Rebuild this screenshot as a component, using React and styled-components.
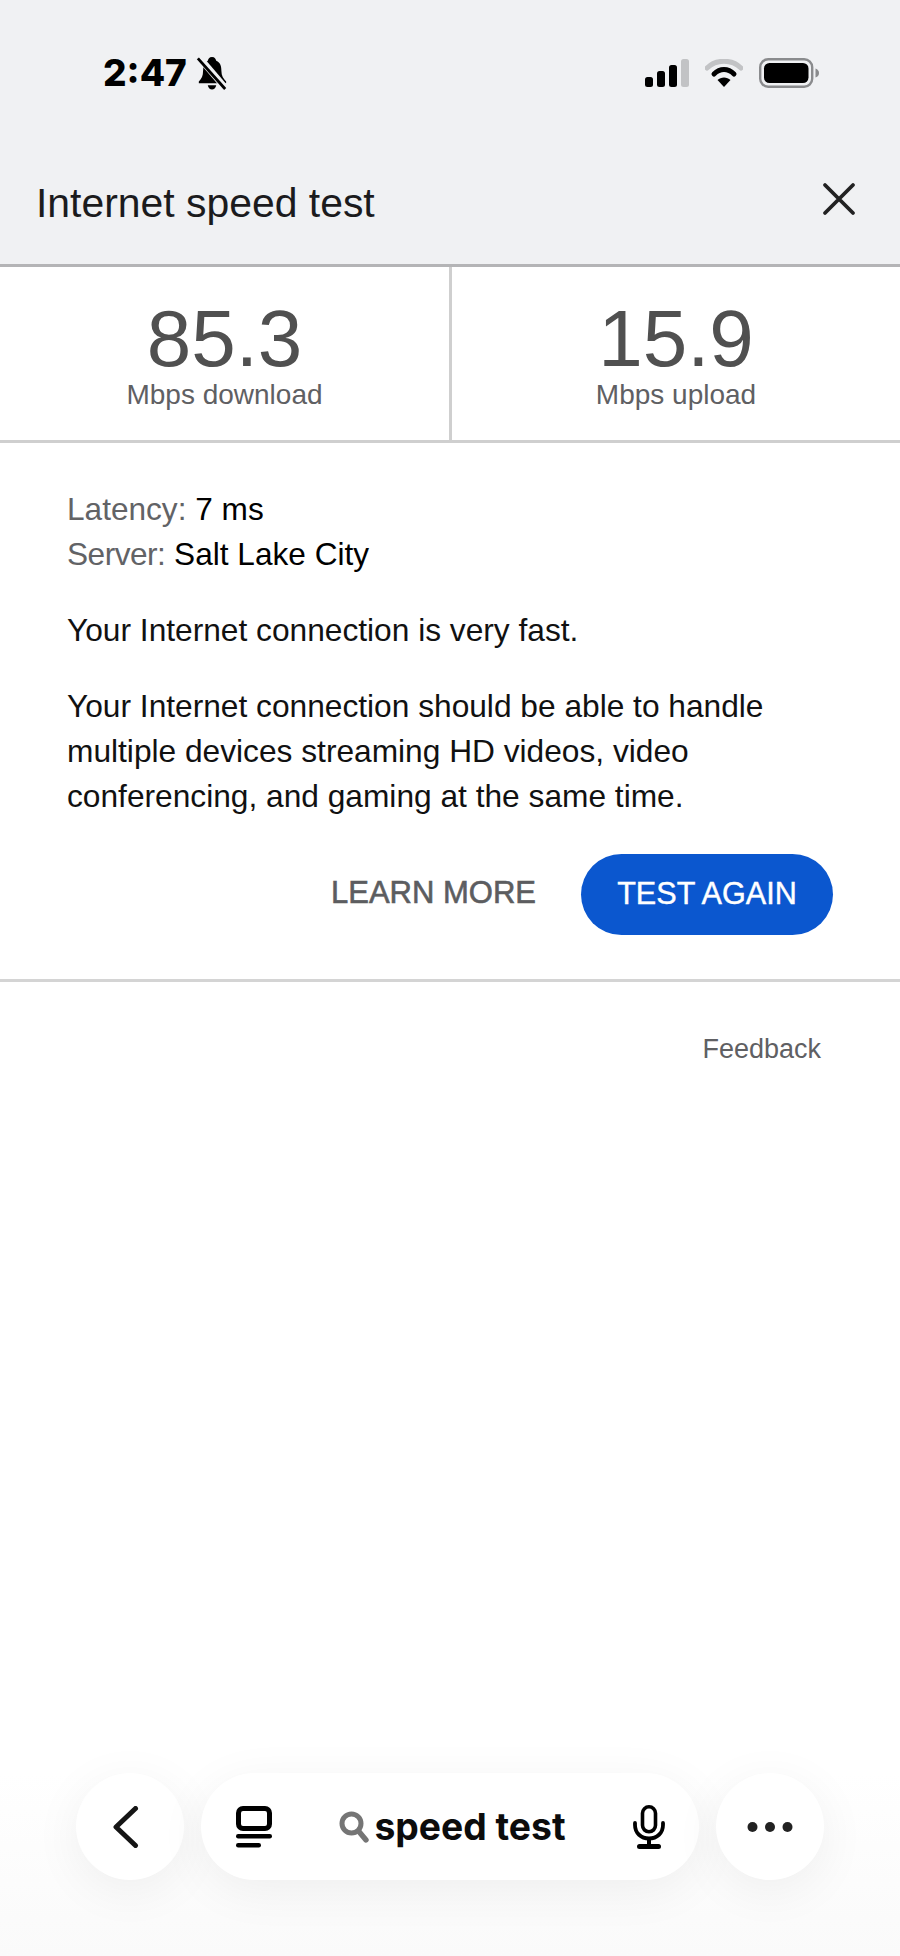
import React from "react";
import styled, { createGlobalStyle } from "styled-components";

const GlobalStyle = createGlobalStyle`
  html, body {
    margin: 0;
    padding: 0;
    background: #fff;
  }
  * {
    box-sizing: border-box;
  }
`;

const Page = styled.div`
  width: 900px;
  height: 1956px;
  background: #fff;
  font-family: "Liberation Sans", Arial, sans-serif;
  display: flex;
  flex-direction: column;
  overflow: hidden;
`;

const TopArea = styled.div`
  height: 267px;
  background: #f0f1f3;
  border-bottom: 3px solid #b4b4b6;
  display: flex;
  flex-direction: column;
`;

const StatusBar = styled.div`
  height: 148px;
  padding: 50px 81px 0 103px;
  display: flex;
  justify-content: space-between;
  align-items: flex-start;
`;

const TimeGroup = styled.div`
  display: flex;
  align-items: center;
  gap: 9px;
`;

const Time = styled.span`
  font-family: Inter, "Liberation Sans", sans-serif;
  font-size: 37px;
  font-weight: 800;
  line-height: 46px;
  color: #000;
`;

const StatusIcons = styled.div`
  display: flex;
  align-items: center;
  gap: 16px;
  height: 46px;
`;

const TitleRow = styled.div`
  flex: 1;
  padding: 0 44px 5px 36px;
  display: flex;
  justify-content: space-between;
  align-items: center;
`;

const Title = styled.h1`
  margin: 0;
  font-size: 40.9px;
  font-weight: 400;
  color: #1b1b1d;
`;

const CloseIcon = styled.svg`
  width: 34px;
  height: 34px;
  margin-bottom: 9px;
`;

const StatsRow = styled.div`
  height: 176px;
  display: grid;
  grid-template-columns: 452px 1fr;
  border-bottom: 3px solid #cfcfcf;
`;

const StatCell = styled.div`
  display: flex;
  flex-direction: column;
  align-items: center;
  padding-top: 32px;
  border-right: ${(props) => (props.$divider ? "3px solid #cfcfcf" : "none")};
`;

const StatValue = styled.div`
  font-size: 80px;
  line-height: 80px;
  color: #505050;
`;

const StatLabel = styled.div`
  font-size: 28px;
  line-height: 32px;
  color: #5f6063;
`;

const Details = styled.div`
  padding: 44px 67px 0;
  height: 539px;
  border-bottom: 3px solid #d4d4d4;
  display: flex;
  flex-direction: column;
`;

const InfoLine = styled.div`
  font-size: 31.6px;
  line-height: 45px;
  color: #000;
`;

const InfoKey = styled.span`
  color: #626366;
  letter-spacing: ${(props) => (props.$tight ? "-0.5px" : "0")};
`;

const Paragraph = styled.p`
  margin: 31px 0 0;
  font-size: 31.7px;
  line-height: 45px;
  color: #111;
`;

const Actions = styled.div`
  margin-top: 35px;
  display: flex;
  justify-content: flex-end;
  align-items: center;
  gap: 45px;
`;

const LearnMore = styled.span`
  font-size: 31px;
  line-height: 36px;
  margin-bottom: 4px;
  color: #5c5d60;
  -webkit-text-stroke: 0.6px #5c5d60;
`;

const TestAgain = styled.button`
  width: 252px;
  height: 81px;
  padding: 0 0 3px;
  border: none;
  border-radius: 41px;
  background: #0b57cf;
  color: #fff;
  font-family: inherit;
  font-size: 30.6px;
  -webkit-text-stroke: 0.4px #fff;
`;

const FeedbackRow = styled.div`
  padding: 51px 79px 0 0;
  display: flex;
  justify-content: flex-end;
  font-size: 27px;
  line-height: 32px;
  color: #5f6063;
`;

const Spacer = styled.div`
  flex: 1;
`;

const BottomBar = styled.div`
  height: 183px;
  padding: 0 76px 76px;
  display: flex;
  gap: 17px;
  background: linear-gradient(to bottom, #ffffff 0%, #fafafa 100%);
`;

const RoundButton = styled.div`
  width: 108px;
  height: 107px;
  border-radius: 50%;
  background: #fff;
  box-shadow: 0 10px 50px rgba(0, 0, 0, 0.06);
  display: flex;
  align-items: center;
  justify-content: center;
  flex: none;
`;

const BackSlot = styled.div`
  display: flex;
  padding-right: 9px;
`;

const SearchPill = styled.div`
  flex: 1;
  height: 107px;
  border-radius: 54px;
  background: #fff;
  box-shadow: 0 10px 50px rgba(0, 0, 0, 0.06);
  display: flex;
  align-items: center;
  justify-content: space-between;
  padding: 0 34px 0 35px;
`;

const Query = styled.div`
  display: flex;
  align-items: center;
  gap: 5px;
`;

const QueryText = styled.span`
  font-family: Inter, "Liberation Sans", sans-serif;
  font-size: 37.3px;
  font-weight: 700;
  color: #0c0c0c;
`;

const SignalBars = () => (
  <svg width="44" height="28" viewBox="0 0 44 28">
    <rect x="0" y="18" width="8" height="10" rx="2.5" fill="#000" />
    <rect x="12" y="12" width="8" height="16" rx="2.5" fill="#000" />
    <rect x="24" y="6" width="8" height="22" rx="2.5" fill="#000" />
    <rect x="36" y="0" width="8" height="28" rx="2.5" fill="#c2c3c5" />
  </svg>
);

const Wifi = () => (
  <svg width="38" height="28" viewBox="0 0 38 28">
    <path d="M2 9 C11 0 27 0 36 9" fill="none" stroke="#c2c3c5" strokeWidth="5" strokeLinecap="round" />
    <path d="M9 15 C15 9 23 9 29 15" fill="none" stroke="#000" strokeWidth="5" strokeLinecap="round" />
    <path d="M19 28 L12.5 21 C16 17.5 22 17.5 25.5 21 Z" fill="#000" />
  </svg>
);

const Battery = () => (
  <svg width="60" height="30" viewBox="0 0 60 30">
    <rect x="1.2" y="1.2" width="52" height="27.6" rx="8" fill="none" stroke="#8a8b8d" strokeWidth="2.4" />
    <rect x="5" y="5" width="44.5" height="20" rx="5.5" fill="#000" />
    <path d="M56.5 10.5 C59 11.5 60 13 60 15 C60 17 59 18.5 56.5 19.5 Z" fill="#8a8b8d" />
  </svg>
);

const MutedBell = () => (
  <svg width="32" height="34" viewBox="0 0 34 36">
    <path d="M17 1 C20 1 21 3 21.5 5 C26 7 27 11 27 16 C27 21 29 24 32 27 L32 29 L3 29 L3 27 C6 24 7.5 21 7.5 16 C7.5 11 9 7 12.5 5 C13 3 14 1 17 1 Z" fill="#000" />
    <path d="M12.5 31 L21.5 31 C21 34 19 35.5 17 35.5 C15 35.5 13 34 12.5 31 Z" fill="#000" />
    <path d="M3 1 L33 36" stroke="#f0f1f3" strokeWidth="7" />
    <path d="M2 2.5 L31 35" stroke="#000" strokeWidth="3" />
  </svg>
);

const BackChevron = () => (
  <svg width="28" height="42" viewBox="0 0 28 42">
    <path d="M23.5 2.5 L4 21 L23.5 39.5" fill="none" stroke="#151515" strokeWidth="5" strokeLinecap="round" strokeLinejoin="round" />
  </svg>
);

const TabsIcon = () => (
  <svg width="36" height="42" viewBox="0 0 36 42">
    <rect x="2.5" y="2.5" width="31" height="20" rx="4.5" fill="none" stroke="#000" strokeWidth="5" />
    <rect x="0" y="28" width="36" height="4.4" rx="2.2" fill="#000" />
    <rect x="0" y="37" width="25" height="4.4" rx="2.2" fill="#000" />
  </svg>
);

const SearchGlass = () => (
  <svg width="30" height="32" viewBox="0 0 30 32">
    <circle cx="12.5" cy="12.5" r="9.5" fill="none" stroke="#757575" strokeWidth="5" />
    <path d="M19.5 20 L27 29" stroke="#757575" strokeWidth="5.4" strokeLinecap="round" />
  </svg>
);

const Mic = () => (
  <svg width="32" height="44" viewBox="0 0 32 44">
    <rect x="9.5" y="1.8" width="13" height="25" rx="6.5" fill="none" stroke="#000" strokeWidth="3.6" />
    <path d="M2 18 L2 20 C2 28 8 33.5 16 33.5 C24 33.5 30 28 30 20 L30 18" fill="none" stroke="#000" strokeWidth="3.8" strokeLinecap="round" />
    <rect x="14" y="33" width="4" height="7" fill="#000" />
    <rect x="4" y="39" width="24" height="5" rx="2.5" fill="#000" />
  </svg>
);

const Dots = () => (
  <svg width="46" height="14" viewBox="0 0 46 14">
    <circle cx="5.5" cy="7" r="5" fill="#222" />
    <circle cx="23" cy="7" r="5" fill="#222" />
    <circle cx="40.5" cy="7" r="5" fill="#222" />
  </svg>
);

const App = () => {
  return (
    <Page>
      <GlobalStyle />
      <TopArea>
        <StatusBar>
          <TimeGroup>
            <Time>2:47</Time>
            <MutedBell />
          </TimeGroup>
          <StatusIcons>
            <SignalBars />
            <Wifi />
            <Battery />
          </StatusIcons>
        </StatusBar>
        <TitleRow>
          <Title>Internet speed test</Title>
          <CloseIcon viewBox="0 0 34 34">
            <path d="M3 3 L31 31 M31 3 L3 31" stroke="#222" strokeWidth="3.8" strokeLinecap="round" />
          </CloseIcon>
        </TitleRow>
      </TopArea>

      <StatsRow>
        <StatCell $divider>
          <StatValue>85.3</StatValue>
          <StatLabel>Mbps download</StatLabel>
        </StatCell>
        <StatCell>
          <StatValue>15.9</StatValue>
          <StatLabel>Mbps upload</StatLabel>
        </StatCell>
      </StatsRow>

      <Details>
        <InfoLine>
          <InfoKey>Latency:</InfoKey> 7 ms
        </InfoLine>
        <InfoLine>
          <InfoKey $tight>Server:</InfoKey> Salt Lake City
        </InfoLine>
        <Paragraph>Your Internet connection is very fast.</Paragraph>
        <Paragraph>
          Your Internet connection should be able to handle
          <br />
          multiple devices streaming HD videos, video
          <br />
          conferencing, and gaming at the same time.
        </Paragraph>
        <Actions>
          <LearnMore>LEARN MORE</LearnMore>
          <TestAgain>TEST AGAIN</TestAgain>
        </Actions>
      </Details>

      <FeedbackRow>Feedback</FeedbackRow>
      <Spacer />

      <BottomBar>
        <RoundButton>
          <BackSlot>
            <BackChevron />
          </BackSlot>
        </RoundButton>
        <SearchPill>
          <TabsIcon />
          <Query>
            <SearchGlass />
            <QueryText>speed test</QueryText>
          </Query>
          <Mic />
        </SearchPill>
        <RoundButton>
          <Dots />
        </RoundButton>
      </BottomBar>
    </Page>
  );
};

export default App;
